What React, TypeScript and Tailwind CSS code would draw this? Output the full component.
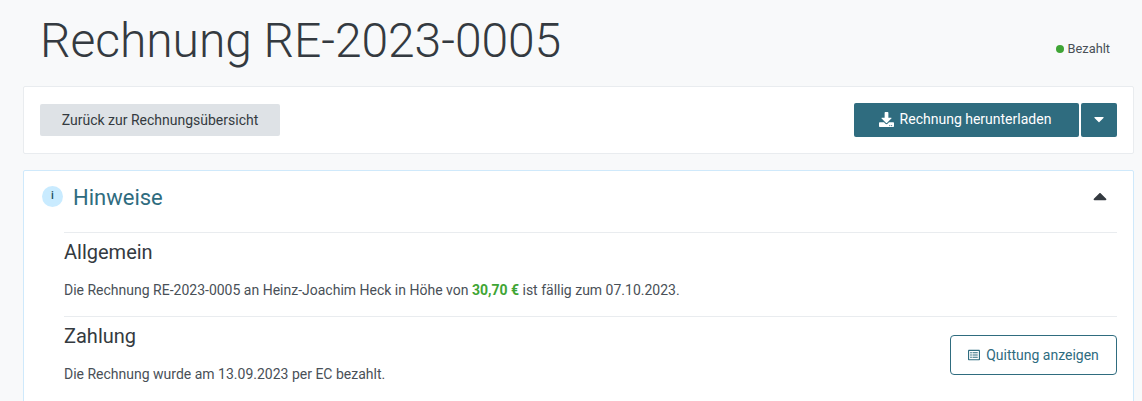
import { FaCaretDown, FaCaretUp, FaDownload, FaRegListAlt } from 'react-icons/fa';

const App = () => {
  return (
    <div className="h-[401px] overflow-hidden bg-[#f8f9fa] pl-[23px] pr-[8px] font-['Roboto',sans-serif] text-[#343a40]">
      {/* Title */}
      <div className="flex h-[86px] items-start justify-between pl-[17px] pr-[24px]">
        <h1 className="mt-[12px] text-[48px] leading-[58px] font-light tracking-[-0.05px]">Rechnung RE-2023-0005</h1>
        <div className="mt-[41px] flex items-center gap-[4px] text-[12.8px] leading-[16px] text-[#495057]">
          <span className="h-[8px] w-[8px] rounded-full bg-[#3fa535]"></span>
          Bezahlt
        </div>
      </div>

      {/* Actions */}
      <div className="flex h-[68px] items-center justify-between rounded-[2px] border border-[#e9ecef] bg-white pl-[16px] pr-[16px]">
        <button className="h-[32px] w-[240px] rounded-[2px] bg-[#dee2e6] text-[14px] text-[#343a40]">
          Zurück zur Rechnungsübersicht
        </button>
        <div className="flex gap-[2px]">
          <button className="flex h-[34px] w-[225px] items-center justify-center gap-[6px] rounded-[2px] bg-[#2f6c7f] pb-[2px] pr-[3px] text-[14px] text-white">
            <FaDownload className="h-[15px] w-[15px]" />
            Rechnung herunterladen
          </button>
          <button className="flex h-[34px] w-[36px] items-center justify-center rounded-[2px] bg-[#2f6c7f] pb-[3px] text-white">
            <FaCaretDown className="h-[16px] w-[16px]" />
          </button>
        </div>
      </div>

      {/* Hinweise */}
      <div className="mt-[16px] rounded-[2px] border border-[#cfe9fb] bg-white pb-[40px]">
        <div className="flex h-[61px] items-start justify-between pl-[18px] pr-[22px] pt-[13px]">
          <div className="flex items-center gap-[10px]">
            <span className="-mt-[3px] flex h-[21px] w-[21px] items-center justify-center rounded-full bg-[#c9ebff] text-[11px] font-medium text-[#24505e]">
              i
            </span>
            <h2 className="text-[22px] leading-[28px] text-[#2f6c7f]">Hinweise</h2>
          </div>
          <FaCaretUp className="mt-[1px] h-[22px] w-[22px] text-[#343a40]" />
        </div>

        <div className="ml-[40px] mr-[16px]">
          <section className="border-t border-[#e9ecef] pb-[15px] pt-[7px]">
            <h3 className="text-[20px] leading-[24px] text-[#343a40]">Allgemein</h3>
            <p className="mt-[16px] text-[14px] leading-[21px] text-[#495057]">
              Die Rechnung RE-2023-0005 an Heinz-Joachim Heck in Höhe von{' '}
              <strong className="font-bold text-[#3fa535]">30,70 €</strong> ist fällig zum 07.10.2023.
            </p>
          </section>
          <section className="flex items-start justify-between border-t border-[#e9ecef] pt-[7px]">
            <div>
              <h3 className="text-[20px] leading-[24px] text-[#343a40]">Zahlung</h3>
              <p className="mt-[16px] text-[14px] leading-[21px] text-[#495057]">
                Die Rechnung wurde am 13.09.2023 per EC bezahlt.
              </p>
            </div>
            <button className="mt-[11px] flex h-[40px] w-[167px] items-center justify-center gap-[6px] rounded-[4px] border border-[#2f6c7f] bg-white text-[14px] text-[#2f6c7f]">
              <FaRegListAlt className="h-[12px] w-[12px]" />
              Quittung anzeigen
            </button>
          </section>
        </div>
      </div>
    </div>
  );
};

export default App;
